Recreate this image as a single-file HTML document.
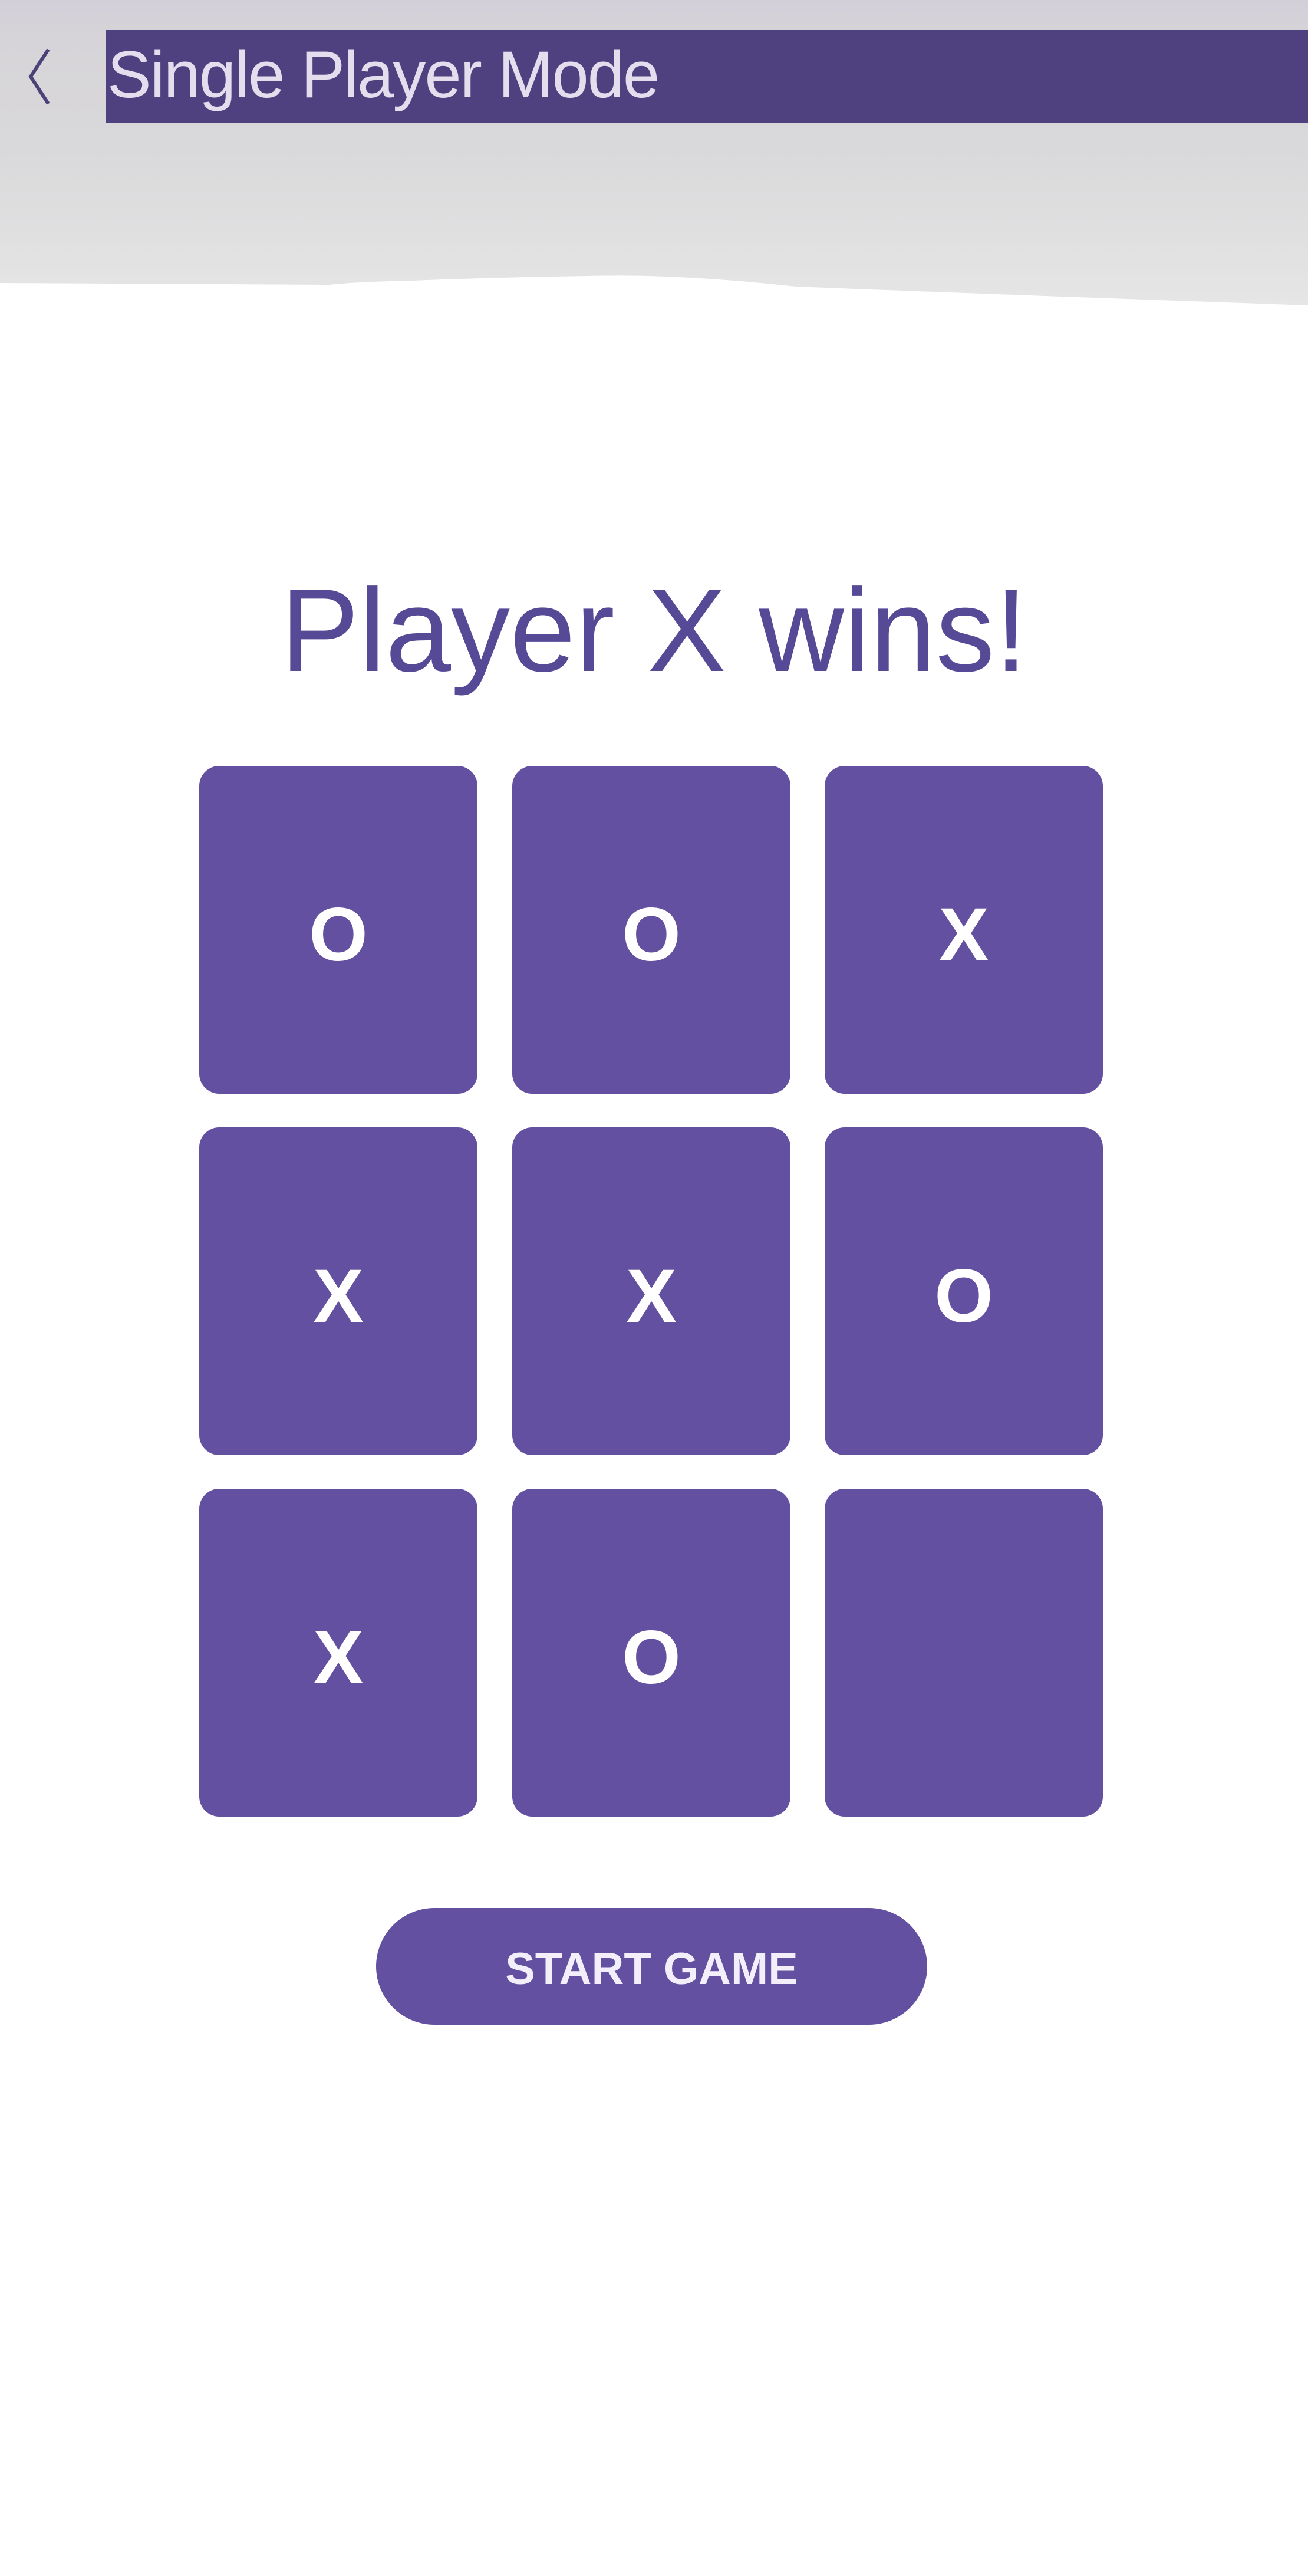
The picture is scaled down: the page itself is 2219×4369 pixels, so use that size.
<!DOCTYPE html>
<html><head><meta charset="utf-8"><style>
html,body{margin:0;padding:0;width:2219px;height:4369px;background:#fff;overflow:hidden;font-family:"Liberation Sans",Arial,sans-serif;position:relative}
.top{position:absolute;left:0;top:0;width:2219px;height:520px;background:linear-gradient(#d2cfd9 0,#d6d4d8 60px,#d9d8da 250px,#e6e6e6 520px)}
.bar{position:absolute;left:180px;top:51px;width:2039px;height:158px;background:#4f4080}
.title{position:absolute;left:182px;top:62px;font-size:112px;color:#e2deee;line-height:130px;white-space:nowrap;letter-spacing:-2px}
.wave{position:absolute;left:0;top:440px}
.win{position:absolute;left:0;width:2219px;text-align:center;top:955px;font-size:200px;color:#564a96;line-height:230px;white-space:nowrap}
.cell{position:absolute;width:472px;height:556px;background:#6450a0;border-radius:34px;color:#fff;font-weight:bold;font-size:128px;display:flex;align-items:center;justify-content:center;padding-top:16px;box-sizing:border-box}
.btn{position:absolute;left:638px;top:3236px;width:935px;height:198px;border-radius:100px;background:#6450a0;color:#f2eefa;font-size:76px;font-weight:bold;display:flex;align-items:center;justify-content:center;padding-top:8px;box-sizing:border-box}
</style></head><body>
<div class="top"></div>
<div class="bar"></div>
<svg style="position:absolute;left:20px;top:70px" width="80" height="120"><path d="M62 14 L32 60 L62 106" stroke="#4a4278" stroke-width="6" fill="none"/></svg>
<div class="title">Single Player Mode</div>
<svg class="wave" width="2219" height="120"><path d="M0 40 L560 43 Q600 38 700 36 Q850 30 1000 28 Q1150 24 1350 46 Q1500 52 1800 63 L2219 78 L2219 120 L0 120 Z" fill="#fff"/></svg>
<div class="win">Player X wins!</div>
<div class="cell" style="left:338px;top:1299px">O</div>
<div class="cell" style="left:869px;top:1299px">O</div>
<div class="cell" style="left:1399px;top:1299px">X</div>
<div class="cell" style="left:338px;top:1912px">X</div>
<div class="cell" style="left:869px;top:1912px">X</div>
<div class="cell" style="left:1399px;top:1912px">O</div>
<div class="cell" style="left:338px;top:2525px">X</div>
<div class="cell" style="left:869px;top:2525px">O</div>
<div class="cell" style="left:1399px;top:2525px"></div>
<div class="btn">START GAME</div>
</body></html>
